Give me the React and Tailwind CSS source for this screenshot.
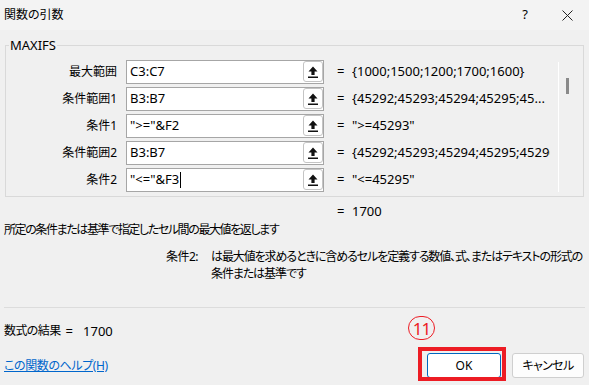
const rows = [
  { label: '最大範囲', input: 'C3:C7', value: '{1000;1500;1200;1700;1600}' },
  { label: '条件範囲1', input: 'B3:B7', value: '{45292;45293;45294;45295;45...' },
  { label: '条件1', input: '">="&F2', value: '">=45293"' },
  { label: '条件範囲2', input: 'B3:B7', value: '{45292;45293;45294;45295;45296}' },
  { label: '条件2', input: '"<="&F3', value: '"<=45295"', caret: true }
]

function RefIcon() {
  return (
    <svg width="10" height="12" viewBox="0 0 10 12" aria-hidden="true">
      <path d="M5 0.5 L9.5 5.5 H6.6 V9 H3.4 V5.5 H0.5 Z" fill="#111" />
      <rect x="0" y="10.5" width="10" height="1.5" fill="#111" />
    </svg>
  )
}

function ArgRow({ label, input, value, caret }) {
  return (
    <div className="flex h-[24px] items-center">
      <div className="w-[111px] text-right text-[12px] text-black">{label}</div>
      <div className="ml-[9px] flex h-[24px] w-[198px] items-center border border-[#a6a6a6] bg-white">
        <div className="flex min-w-0 flex-1 items-center pl-[3px] text-[13px] text-black">
          <span className="whitespace-nowrap">{input}</span>
          {caret && <span className="ml-[1px] h-[16px] w-[1px] bg-black" />}
        </div>
        <div className="flex h-[21px] w-[20px] items-center justify-center self-start rounded-[3px] border border-[#c4c4c4] bg-white">
          <RefIcon />
        </div>
      </div>
      <div className="ml-[13px] w-[15px] text-[13px] text-black">=</div>
      <div className="w-[198px] overflow-hidden whitespace-nowrap text-[13px] text-black">
        {value}
      </div>
    </div>
  )
}

export default function App() {
  return (
    <div className="relative h-[385px] w-[589px] overflow-hidden bg-[#f0f0f0] font-['Noto_Sans','Noto_Sans_CJK_JP',sans-serif] text-black [font-feature-settings:'palt']">
      <div className="flex h-[30px] items-center justify-between bg-[#f3f3f3] pl-[4px] pr-[16px]">
        <span className="text-[12px]">関数の引数</span>
        <div className="flex items-center gap-[34px]">
          <span className="text-[13px]">?</span>
          <svg width="11" height="11" viewBox="0 0 11 11" aria-hidden="true">
            <path d="M0.5 0.5 L10.5 10.5 M10.5 0.5 L0.5 10.5" stroke="#222" strokeWidth="1" />
          </svg>
        </div>
      </div>

      <div className="relative mx-[5px] mt-[15px] border border-[#d9d9d9] pb-[4px] pt-[14px]">
        <span className="absolute left-[3px] top-[-10px] bg-[#f0f0f0] px-[1px] text-[13px] leading-[18px]">
          MAXIFS
        </span>
        <div className="flex">
          <div className="flex w-[553px] flex-col gap-[3px]">
            {rows.map((row) => (
              <ArgRow key={row.label} {...row} />
            ))}
          </div>
          <div className="mt-[2px] w-[25px] border-l border-white">
            <div className="ml-[7px] mt-[16px] h-[16px] w-[3px] bg-[#8a8a8a]" />
          </div>
        </div>
      </div>

      <div className="ml-[337px] mt-[7px] flex h-[16px] items-center text-[13px]">
        <span className="w-[15px]">=</span>
        <span>1700</span>
      </div>

      <p className="ml-[4px] mt-[1px] whitespace-nowrap text-[12px] leading-[17px] tracking-[-1.4px]">
        所定の条件または基準で指定したセル間の最大値を返します
      </p>

      <div className="mt-[10px] flex text-[12px] leading-[17px]">
        <span className="w-[198px] whitespace-nowrap text-right tracking-[-0.5px]">条件2:</span>
        <div className="ml-[13px] flex flex-col whitespace-nowrap tracking-[-1.1px]">
          <span>は最大値を求めるときに含めるセルを定義する数値、式、またはテキストの形式の</span>
          <span>条件または基準です</span>
        </div>
      </div>

      <div className="mx-[4px] mt-[25px] h-px bg-[#dcdcdc]" />

      <div className="ml-[4px] mt-[15px] flex items-center text-[13px] leading-[16px]">
        <span className="text-[12px] tracking-[-0.6px]">数式の結果</span>
        <span className="ml-[5px]">=</span>
        <span className="ml-[10px]">1700</span>
      </div>

      <div className="mt-[14px] flex items-center justify-between pl-[4px] pr-[5px]">
        <span className="text-[12px] tracking-[-0.4px] text-[#0066cc] underline">この関数のヘルプ(H)</span>
        <div className="flex gap-[11px]">
          <div className="flex h-[25px] w-[74px] items-center justify-center rounded-[3px] border border-[#0067c0] bg-white text-[12px]">
            OK
          </div>
          <div className="flex h-[25px] w-[72px] items-center justify-center rounded-[3px] border border-[#cfcfcf] bg-[#fdfdfd] text-[12px] tracking-[-0.6px]">
            キャンセル
          </div>
        </div>
      </div>

      <div className="absolute left-[418px] top-[347px] h-[34px] w-[88px] border-[4px] border-[#ed1c24]" />
      <div className="absolute left-[408px] top-[316px] flex h-[24px] w-[27px] items-center justify-center rounded-full border-[1.5px] border-[#ed1c24] text-[17px] leading-none tracking-[-1px] text-[#ed1c24]">
        11
      </div>
    </div>
  )
}
